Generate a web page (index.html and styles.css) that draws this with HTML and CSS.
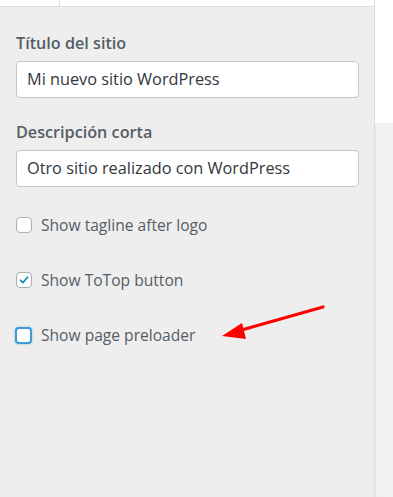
FILE: index.html
```html
<!DOCTYPE html>
<html lang="es">
<head>
<meta charset="utf-8">
<link rel="stylesheet" href="styles.css">
</head>
<body>
<div class="page">
  <div class="panel">
    <div class="tabs">
      <div class="tab tab-first"></div>
      <div class="tab"></div>
    </div>
    <div class="content">
      <div class="field">
        <label class="label">Título del sitio</label>
        <div class="input">Mi nuevo sitio WordPress</div>
      </div>
      <div class="field">
        <label class="label">Descripción corta</label>
        <div class="input">Otro sitio realizado con WordPress</div>
      </div>
      <div class="check check-first">
        <span class="box"></span>
        <span class="check-label">Show tagline after logo</span>
      </div>
      <div class="check">
        <span class="box">
          <svg class="tick" viewBox="0 0 16 16" width="16" height="16"><path d="M4 8.3 L6.8 11 L12 4.8" fill="none" stroke="#1e8cbe" stroke-width="2" stroke-linecap="round" stroke-linejoin="round"/></svg>
        </span>
        <span class="check-label">Show ToTop button</span>
      </div>
      <div class="check">
        <span class="box box-focus"></span>
        <span class="check-label">Show page preloader</span>
      </div>
    </div>
    <svg class="arrow" width="374" height="497" viewBox="0 0 374 497">
      <line x1="323" y1="307" x2="238" y2="331" stroke="#ff0000" stroke-width="3.2" stroke-linecap="round"/>
      <polygon points="222,336 242,323 246,339" fill="#ff0000"/>
    </svg>
  </div>
  <div class="side">
    <div class="side-top"></div>
    <div class="side-bottom"></div>
  </div>
</div>
</body>
</html>
```

FILE: styles.css
```css
html, body {
  margin: 0;
  padding: 0;
  height: 100%;
}
body {
  font-family: "Open Sans", "Noto Sans", sans-serif;
  background: #f1f1f1;
}
.page {
  display: flex;
  height: 497px;
  overflow: hidden;
}
.panel {
  position: relative;
  width: 374px;
  flex: none;
  background: #eeeeee;
  border-right: 1px solid #dddddd;
}
.tabs {
  display: flex;
  height: 6px;
  background: #ffffff;
  border-bottom: 1px solid #dddddd;
}
.tab-first {
  width: 59px;
  border-right: 1px solid #dddddd;
}
.content {
  padding: 26px 15px 0 16px;
}
.field {
  margin-bottom: 24px;
}
.field + .field {
  margin-bottom: 0;
}
.label {
  display: block;
  font-size: 16.2px;
  font-weight: 600;
  line-height: 20px;
  color: #555d66;
  margin-bottom: 8px;
}
.input {
  box-sizing: border-box;
  height: 37px;
  border: 1px solid #c3c6c9;
  border-radius: 4px;
  background: #ffffff;
  padding: 0 10px;
  font-size: 16.3px;
  line-height: 35px;
  color: #32373c;
  white-space: nowrap;
}
.check {
  display: flex;
  align-items: center;
  height: 20px;
  margin-top: 35px;
}
.check-first {
  margin-top: 28px;
}
.box {
  box-sizing: border-box;
  width: 16px;
  height: 16px;
  border: 1px solid #a9adb2;
  border-radius: 4px;
  background: #ffffff;
  margin-right: 9px;
  display: flex;
  align-items: center;
  justify-content: center;
}
.box-focus {
  width: 17px;
  height: 17px;
  margin-left: -1px;
  border: 2px solid #3c9ad6;
  box-shadow: 0 0 2px rgba(30, 140, 190, 0.6);
}
.tick {
  display: block;
}
.check-label {
  font-size: 15.6px;
  color: #555d66;
  line-height: 20px;
  white-space: nowrap;
}
.arrow {
  position: absolute;
  left: 0;
  top: 0;
  pointer-events: none;
}
.side {
  flex: 1;
  display: flex;
  flex-direction: column;
}
.side-top {
  height: 123px;
  background: #ffffff;
}
.side-bottom {
  flex: 1;
  background: #f1f1f1;
  box-shadow: inset 2px 0 2px -1px rgba(0,0,0,0.05);
}
```
